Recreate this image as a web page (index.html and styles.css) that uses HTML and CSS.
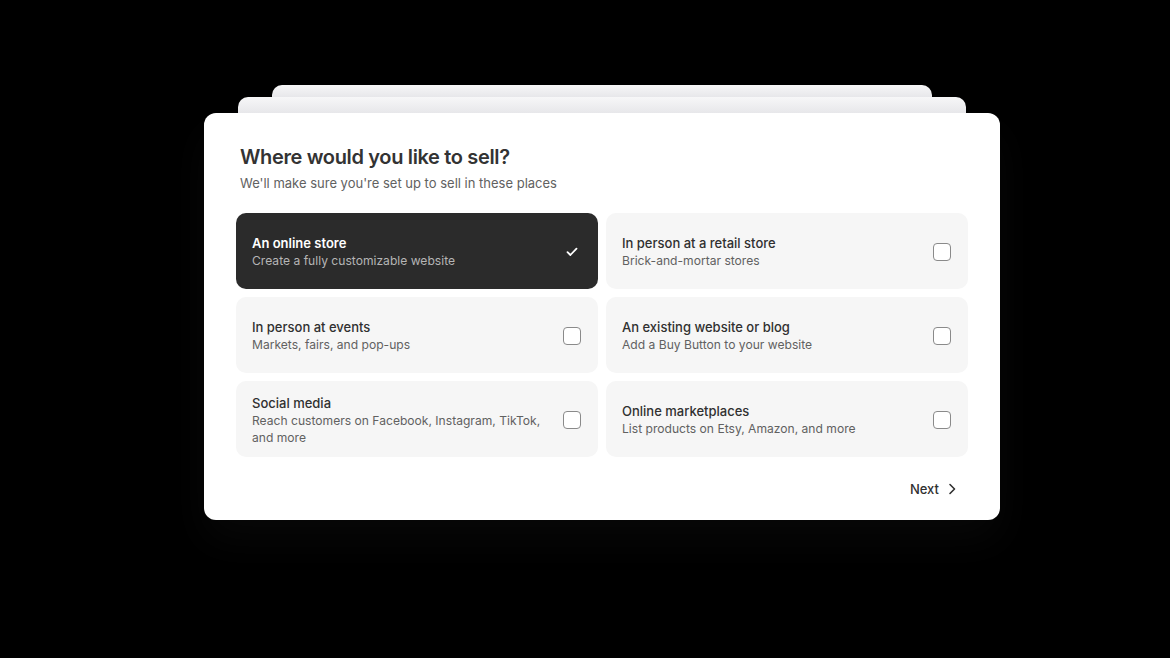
FILE: index.html
```html
<!DOCTYPE html>
<html lang="en">

<head>
    <meta charset="UTF-8">
    <meta name="viewport" content="width=device-width, initial-scale=1.0">
    <title>Where would you like to sell?</title>
    <link rel="stylesheet" href="styles.css">
</head>

<body>
    <div class="stage">
        <div class="sheet sheet-far"></div>
        <div class="sheet sheet-near"></div>

        <div class="modal">
            <h1 class="modal-title">Where would you like to sell?</h1>
            <p class="modal-subtitle">We'll make sure you're set up to sell in these places</p>

            <div class="options">
                <label class="option selected">
                    <div class="option-text">
                        <div class="option-title">An online store</div>
                        <div class="option-desc">Create a fully customizable website</div>
                    </div>
                    <span class="check">
                        <svg width="12" height="10" viewBox="0 0 12 10"><path d="M1.5 5.2 L4.4 8 L10.5 1.6" fill="none" stroke="#fff" stroke-width="1.8" stroke-linecap="round" stroke-linejoin="round"/></svg>
                    </span>
                </label>
                <label class="option">
                    <div class="option-text">
                        <div class="option-title">In person at a retail store</div>
                        <div class="option-desc">Brick-and-mortar stores</div>
                    </div>
                    <span class="box"></span>
                </label>
                <label class="option">
                    <div class="option-text">
                        <div class="option-title">In person at events</div>
                        <div class="option-desc">Markets, fairs, and pop-ups</div>
                    </div>
                    <span class="box"></span>
                </label>
                <label class="option">
                    <div class="option-text">
                        <div class="option-title">An existing website or blog</div>
                        <div class="option-desc">Add a Buy Button to your website</div>
                    </div>
                    <span class="box"></span>
                </label>
                <label class="option">
                    <div class="option-text">
                        <div class="option-title">Social media</div>
                        <div class="option-desc">Reach customers on Facebook, Instagram, TikTok, and more</div>
                    </div>
                    <span class="box"></span>
                </label>
                <label class="option">
                    <div class="option-text">
                        <div class="option-title">Online marketplaces</div>
                        <div class="option-desc">List products on Etsy, Amazon, and more</div>
                    </div>
                    <span class="box"></span>
                </label>
            </div>

            <div class="modal-footer">
                <button class="next-button">Next
                    <svg width="8" height="12" viewBox="0 0 8 12"><path d="M2 1.5 L6.5 6 L2 10.5" fill="none" stroke="#303030" stroke-width="1.6" stroke-linecap="round" stroke-linejoin="round"/></svg>
                </button>
            </div>
        </div>
    </div>
</body>

</html>
```

FILE: styles.css
```css
html,
body {
    margin: 0;
    height: 100%;
    background: #000;
}

body {
    font-family: Inter, "Noto Sans", sans-serif;
    color: #303030;
}

.stage {
    width: 796px;
    padding-top: 85px;
    margin-left: 204px;
    display: flex;
    flex-direction: column;
}

/* листы позади модалки */
.sheet {
    align-self: center;
    border-radius: 10px 10px 0 0;
    background: linear-gradient(#f7f7f8, #e7e7ea);
}

.sheet-far {
    width: 660px;
    height: 12px;
}

.sheet-near {
    width: 728px;
    height: 16px;
}

.modal {
    background: #fff;
    border-radius: 12px;
    padding: 32px 32px 17px;
    box-shadow: 0 20px 40px rgba(255, 255, 255, 0.03);
}

.modal-title {
    margin: 0 0 0 4px;
    font-size: 20px;
    line-height: 24px;
    font-weight: 600;
    letter-spacing: -0.35px;
    color: #333;
}

.modal-subtitle {
    margin: 5px 0 0 4px;
    font-size: 13px;
    line-height: 18px;
    color: #616161;
}

.options {
    margin-top: 21px;
    display: grid;
    grid-template-columns: 1fr 1fr;
    gap: 8px;
}

.option {
    height: 76px;
    box-sizing: border-box;
    padding: 2px 17px 0 16px;
    display: flex;
    align-items: center;
    gap: 16px;
    background: #f6f6f6;
    border-radius: 10px;
    cursor: pointer;
}

.option-text {
    flex: 1;
}

.option-title {
    font-size: 13px;
    line-height: 17px;
    font-weight: 500;
    color: #303030;
}

.option-desc {
    font-size: 12.1px;
    line-height: 17px;
    color: #616161;
}

.option.selected {
    background: #2b2b2b;
}

.option.selected .option-title {
    color: #fff;
    font-weight: 600;
}

.option.selected .option-desc {
    color: #b5b5b5;
}

.box,
.check {
    width: 18px;
    height: 18px;
    box-sizing: border-box;
    flex: none;
    display: flex;
    align-items: center;
    justify-content: center;
}

.box {
    background: #fff;
    border: 1px solid #8a8a8a;
    border-radius: 4px;
}

.modal-footer {
    margin-top: 18px;
    display: flex;
    justify-content: flex-end;
}

.next-button {
    display: flex;
    align-items: center;
    gap: 9px;
    padding: 6px 12px;
    height: 28px;
    background: none;
    border: none;
    font-family: inherit;
    font-size: 13px;
    font-weight: 500;
    color: #303030;
    cursor: pointer;
}
```
